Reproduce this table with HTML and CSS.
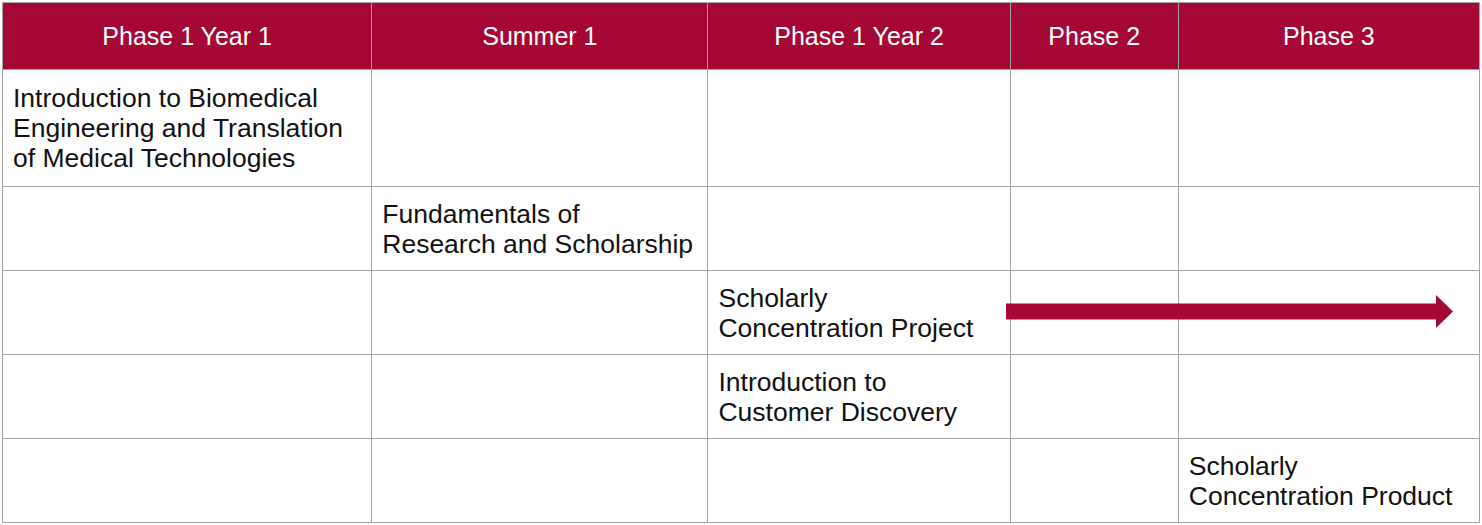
FILE: index.html
```html
<!DOCTYPE html>
<html lang="en">
<head>
<meta charset="utf-8">
<title>Program Timeline</title>
<link rel="stylesheet" href="styles.css">
</head>
<body>
<div class="wrap">
  <table class="timeline">
    <colgroup>
      <col class="c1"><col class="c2"><col class="c3"><col class="c4"><col class="c5">
    </colgroup>
    <thead>
      <tr>
        <th>Phase 1 Year 1</th>
        <th>Summer 1</th>
        <th>Phase 1 Year 2</th>
        <th>Phase 2</th>
        <th>Phase 3</th>
      </tr>
    </thead>
    <tbody>
      <tr class="tall">
        <td>Introduction to Biomedical Engineering and Translation of Medical Technologies</td>
        <td></td><td></td><td></td><td></td>
      </tr>
      <tr>
        <td></td>
        <td>Fundamentals of<br>Research and Scholarship</td>
        <td></td><td></td><td></td>
      </tr>
      <tr>
        <td></td><td></td>
        <td>Scholarly<br>Concentration Project</td>
        <td></td><td></td>
      </tr>
      <tr>
        <td></td><td></td>
        <td>Introduction to<br>Customer Discovery</td>
        <td></td><td></td>
      </tr>
      <tr>
        <td></td><td></td><td></td><td></td>
        <td>Scholarly<br>Concentration Product</td>
      </tr>
    </tbody>
  </table>
  <svg class="arrow" width="447" height="33" viewBox="0 0 447 33" aria-hidden="true">
    <rect x="0" y="8.5" width="431" height="16" fill="#a50834"/>
    <polygon points="430,0 447,16.5 430,33" fill="#a50834"/>
  </svg>
</div>
</body>
</html>
```
FILE: styles.css
```css
html, body {
  margin: 0;
  padding: 0;
  background: #ffffff;
}
body {
  padding: 2px 0 0 2px;
  font-family: "Liberation Sans", Arial, sans-serif;
}
.wrap {
  position: relative;
  width: 1478px;
}
.timeline {
  border-collapse: collapse;
  table-layout: fixed;
  width: 1478px;
  font-size: 26.5px;
  line-height: 30px;
  color: #111111;
}
.c1 { width: 369px; }
.c2 { width: 336px; }
.c3 { width: 302px; }
.c4 { width: 168px; }
.c5 { width: 301px; }
.timeline th,
.timeline td {
  border: 1px solid #a3a3a3;
  padding: 11px 10px;
  vertical-align: middle;
  text-align: left;
}
.timeline th {
  background: #a50834;
  color: #ffffff;
  font-weight: normal;
  font-size: 25px;
  text-align: center;
  height: 44px;
}
.timeline tbody tr {
  height: 84px;
}
.timeline tbody tr.tall {
  height: 117px;
}
.arrow {
  position: absolute;
  left: 1004px;
  top: 293px;
}
```
